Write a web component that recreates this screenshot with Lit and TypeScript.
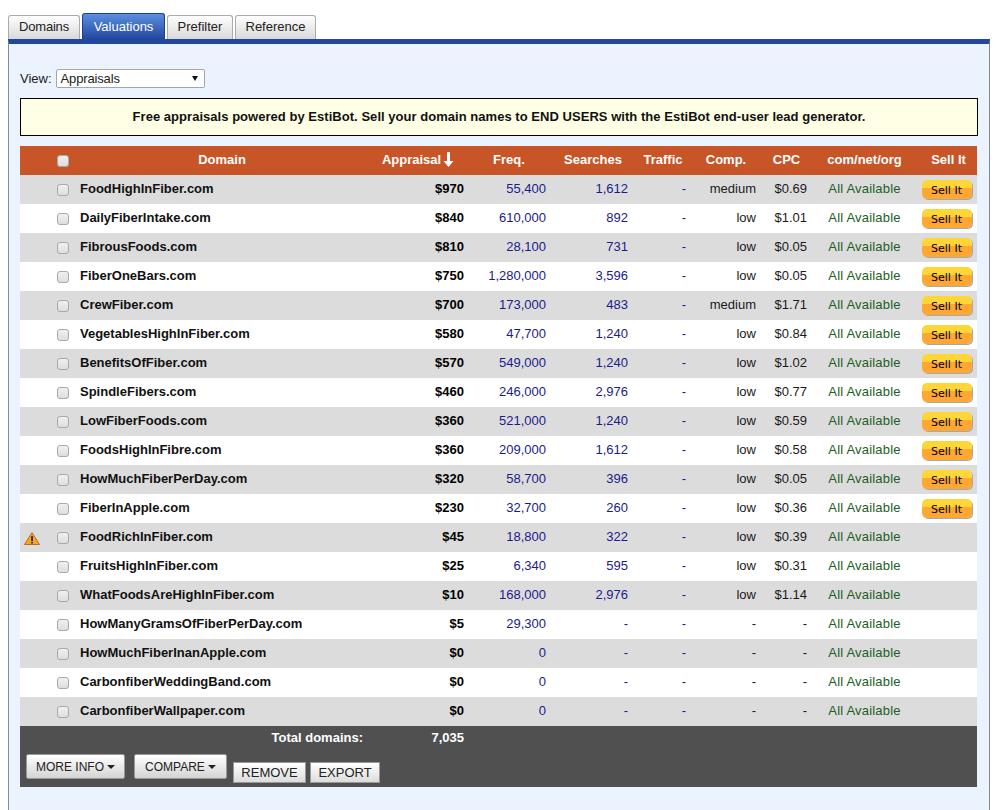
import { LitElement, html, css, svg } from "lit";
import { customElement } from "lit/decorators.js";

type Row = [string, string, string, string, string, string, string, boolean?];
const rows: Row[] = [
  ["FoodHighInFiber.com", "$970", "55,400", "1,612", "medium", "$0.69", "y"],
  ["DailyFiberIntake.com", "$840", "610,000", "892", "low", "$1.01", "y"],
  ["FibrousFoods.com", "$810", "28,100", "731", "low", "$0.05", "y"],
  ["FiberOneBars.com", "$750", "1,280,000", "3,596", "low", "$0.05", "y"],
  ["CrewFiber.com", "$700", "173,000", "483", "medium", "$1.71", "y"],
  ["VegetablesHighInFiber.com", "$580", "47,700", "1,240", "low", "$0.84", "y"],
  ["BenefitsOfFiber.com", "$570", "549,000", "1,240", "low", "$1.02", "y"],
  ["SpindleFibers.com", "$460", "246,000", "2,976", "low", "$0.77", "y"],
  ["LowFiberFoods.com", "$360", "521,000", "1,240", "low", "$0.59", "y"],
  ["FoodsHighInFibre.com", "$360", "209,000", "1,612", "low", "$0.58", "y"],
  ["HowMuchFiberPerDay.com", "$320", "58,700", "396", "low", "$0.05", "y"],
  ["FiberInApple.com", "$230", "32,700", "260", "low", "$0.36", "y"],
  ["FoodRichInFiber.com", "$45", "18,800", "322", "low", "$0.39", "", true],
  ["FruitsHighInFiber.com", "$25", "6,340", "595", "low", "$0.31", ""],
  ["WhatFoodsAreHighInFiber.com", "$10", "168,000", "2,976", "low", "$1.14", ""],
  ["HowManyGramsOfFiberPerDay.com", "$5", "29,300", "-", "-", "-", ""],
  ["HowMuchFiberInanApple.com", "$0", "0", "-", "-", "-", ""],
  ["CarbonfiberWeddingBand.com", "$0", "0", "-", "-", "-", ""],
  ["CarbonfiberWallpaper.com", "$0", "0", "-", "-", "-", ""],
];

const widths = [30, 26, 290, 104, 82, 82, 58, 70, 51, 103, 61];

@customElement("app-root")
export class AppRoot extends LitElement {
  static styles = css`
    :host {
      display: block;
      width: 1000px;
      height: 810px;
      overflow: hidden;
      background: #fff;
      font-family: "Liberation Sans", Arial, sans-serif;
      font-size: 13px;
      color: #000;
    }
    .page { padding: 13px 0 0 8px; width: 982px; box-sizing: content-box; }
    .tabs { display: flex; align-items: flex-end; gap: 2px; height: 26px; }
    .tab {
      box-sizing: border-box;
      height: 24px;
      border: 1px solid #aaa;
      border-bottom: 0;
      border-radius: 3px 3px 0 0;
      background: linear-gradient(#fefefe, #d9d9d9);
      font-size: 13px;
      color: #222;
      text-align: center;
      line-height: 22px;
    }
    .tab.first { letter-spacing: -0.2px; }
    .tab.active {
      height: 26px;
      line-height: 25px;
      border-color: #1d3f86;
      background: linear-gradient(#5b8fe0, #23479f);
      color: #fff;
    }
    .panel {
      box-sizing: border-box;
      width: 982px;
      height: 771px;
      border-top: 5px solid #23479b;
      border-left: 1px solid #8a8a8a;
      border-right: 1px solid #8a8a8a;
      background: #ebf3fe;
      padding: 25px 11px 0 11px;
    }
    .view { display: flex; align-items: center; gap: 4px; height: 19px; font-size: 13px; color: #222; }
    .select {
      box-sizing: border-box;
      width: 149px;
      height: 19px;
      border: 1px solid #a6a6a6;
      border-radius: 2px;
      background: #fff;
      font-size: 13px;
      letter-spacing: -0.15px;
      line-height: 17px;
      padding-left: 4px;
      color: #222;
      display: flex;
      justify-content: space-between;
      align-items: center;
    }
    .select svg { margin-right: 6px; }
    .notice {
      box-sizing: border-box;
      margin-top: 10px;
      height: 38px;
      border: 1px solid #000;
      background: #ffffe6;
      font-weight: bold;
      font-size: 13px;
      letter-spacing: 0.035px;
      color: #111;
      display: flex;
      align-items: center;
      justify-content: center;
      padding-bottom: 2px;
    }
    table {
      margin-top: 10px;
      width: 957px;
      table-layout: fixed;
      border-collapse: collapse;
      border-spacing: 0;
    }
    th {
      box-sizing: border-box;
      height: 29px;
      padding: 0 0 2px;
      background: #c75527;
      color: #fff;
      font-size: 13px;
      font-weight: bold;
      text-align: center;
      white-space: nowrap;
    }
    th.pl2 { padding-left: 2px; }
    th.pl4 { padding-left: 4px; }
    th.pr2 { padding-right: 2px; }
    th.pr4 { padding-right: 4px; }
    th svg { vertical-align: -3px; margin-left: 2px; }
    td {
      box-sizing: border-box;
      height: 29px;
      padding: 0 0 2px;
      font-size: 13px;
      background: #fff;
      white-space: nowrap;
      color: #1a1a1a;
    }
    tr.alt td { background: #dcdcdc; }
    td.ico { text-align: left; padding: 2px 0 0 4px; }
    .ico svg { display: block; }
    .chk { text-align: center; }
    .box {
      display: inline-block;
      box-sizing: border-box;
      width: 12px;
      height: 12px;
      vertical-align: middle;
      border: 1px solid #a9a9a9;
      border-radius: 3px;
      background: linear-gradient(#f0f0f0, #dedede);
    }
    td.name { font-weight: bold; padding-left: 4px; color: #111; }
    td.r { text-align: right; padding-right: 6px; }
    td.app { font-weight: bold; color: #000; }
    td.blue { color: #1b1b8c; }
    td.avail { text-align: center; color: #1c5e24; letter-spacing: 0.2px; }
    td.sell { padding: 0 0 0 6px; }
    .sellbtn {
      display: block;
      width: 50px;
      height: 19px;
      border-radius: 5px;
      background: linear-gradient(#ffd638 0 8px, #ffa733 8px 100%);
      box-shadow: 1px 1px 0 #a8a8a8;
      font-family: "DejaVu Sans", sans-serif;
      font-size: 11px;
      line-height: 21px;
      padding-right: 1px;
      box-sizing: border-box;
      text-align: center;
      color: #000;
    }
    .footer { background: #505050; width: 957px; height: 61px; box-sizing: border-box; }
    .total {
      display: flex;
      height: 23px;
      align-items: center;
      color: #fff;
      font-weight: bold;
      font-size: 13px;
    }
    .total .lbl { width: 343px; text-align: right; }
    .total .num { width: 101px; text-align: right; }
    .actions { display: flex; align-items: flex-start; padding: 5px 0 0 6px; }
    .dd {
      box-sizing: border-box;
      height: 25px;
      border: 1px solid #999;
      border-radius: 2px;
      background: linear-gradient(#fff, #d4d4d4);
      color: #222;
      font-size: 12px;
      display: flex;
      align-items: center;
      justify-content: center;
      gap: 3px;
      margin-right: 9px;
    }
    .plain {
      box-sizing: border-box;
      height: 21px;
      margin-top: 8px;
      border: 1px solid #999;
      background: linear-gradient(#fff, #dcdcdc);
      color: #222;
      font-size: 13px;
      display: flex;
      align-items: center;
      justify-content: center;
      margin-right: 4px;
    }
  `;

  private warn() {
    return svg`<svg width="16" height="13" viewBox="0 0 16 13">
      <path d="M8 .6 L15.5 12.5 H.5 Z" fill="#f5a623" stroke="#c0691c" stroke-width="1" stroke-linejoin="round"/>
      <rect x="7.2" y="4" width="1.7" height="5" fill="#222"/>
      <rect x="7.2" y="9.8" width="1.7" height="1.7" fill="#222"/>
    </svg>`;
  }

  private caret() {
    return svg`<svg width="8" height="4" viewBox="0 0 8 4"><path d="M0 0H8L4 4Z" fill="#222"/></svg>`;
  }

  render() {
    return html`
      <div class="page">
        <div class="tabs">
          <div class="tab first" style="width:72px">Domains</div>
          <div class="tab active" style="width:83px">Valuations</div>
          <div class="tab" style="width:66px">Prefilter</div>
          <div class="tab" style="width:81px">Reference</div>
        </div>
        <div class="panel">
          <div class="view">
            <span>View:</span>
            <div class="select">
              <span>Appraisals</span>
              <svg width="6" height="5" viewBox="0 0 6 5"><path d="M0 0H6L3 5Z" fill="#111"/></svg>
            </div>
          </div>
          <div class="notice">Free appraisals powered by EstiBot. Sell your domain names to END USERS with the EstiBot end-user lead generator.</div>
          <table>
            <colgroup>${widths.map((w) => html`<col style="width:${w}px" />`)}</colgroup>
            <thead>
              <tr>
                <th></th>
                <th><span class="box"></span></th>
                <th class="pl2">Domain</th>
                <th>Appraisal<svg width="11" height="15" viewBox="0 0 11 15"><path d="M4 0H7V9H10.5L5.5 15L.5 9H4Z" fill="#fff"/></svg></th>
                <th class="pr4">Freq.</th>
                <th>Searches</th>
                <th>Traffic</th>
                <th class="pr2">Comp.</th>
                <th class="pr2">CPC</th>
                <th>com/net/org</th>
                <th class="pl4">Sell It</th>
              </tr>
            </thead>
            <tbody>
              ${rows.map(
                (r, i) => html`
                  <tr class=${i % 2 === 0 ? "alt" : ""}>
                    <td class="ico">${r[7] ? this.warn() : ""}</td>
                    <td class="chk"><span class="box"></span></td>
                    <td class="name">${r[0]}</td>
                    <td class="r app">${r[1]}</td>
                    <td class="r blue">${r[2]}</td>
                    <td class="r blue">${r[3]}</td>
                    <td class="r blue">-</td>
                    <td class="r">${r[4]}</td>
                    <td class="r">${r[5]}</td>
                    <td class="avail">All Available</td>
                    <td class="sell">${r[6] ? html`<span class="sellbtn">Sell It</span>` : ""}</td>
                  </tr>
                `
              )}
            </tbody>
          </table>
          <div class="footer">
            <div class="total"><span class="lbl">Total domains:</span><span class="num">7,035</span></div>
            <div class="actions">
              <div class="dd" style="width:99px">MORE INFO ${this.caret()}</div>
              <div class="dd" style="width:93px;margin-right:6px">COMPARE ${this.caret()}</div>
              <div class="plain" style="width:73px">REMOVE</div>
              <div class="plain" style="width:70px">EXPORT</div>
            </div>
          </div>
        </div>
      </div>
    `;
  }
}
